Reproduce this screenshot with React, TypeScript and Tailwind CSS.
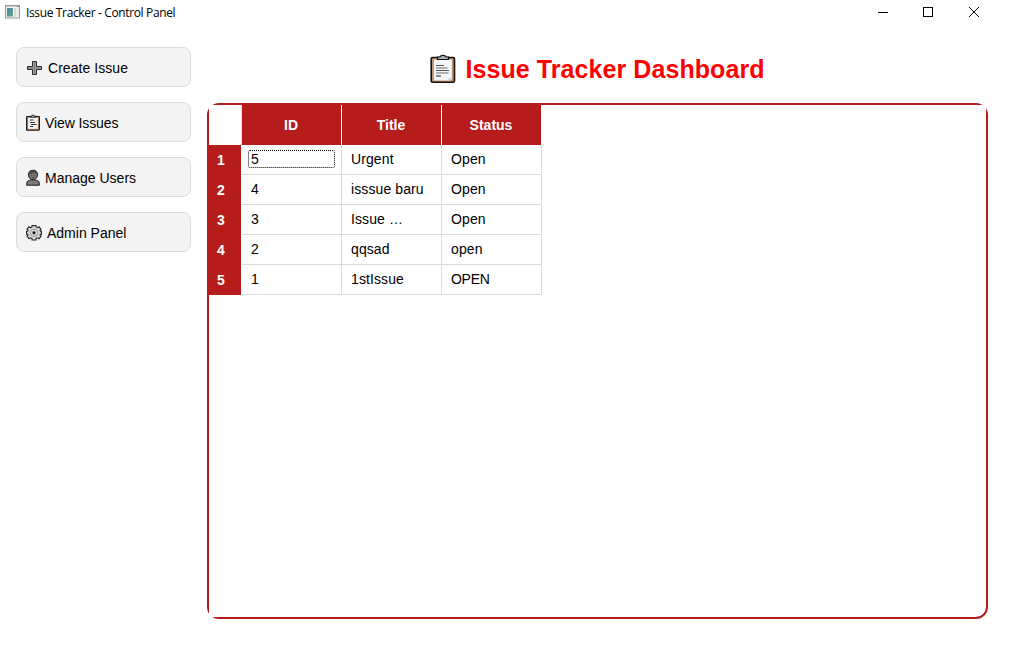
import React from 'react';

const PlusIcon = () => (
  <svg width="16" height="16" viewBox="0 0 16 16" className="mt-[2px] block shrink-0">
    <path d="M6.500 1.500h4v5h5v3h-5v5h-4v-5h-5v-3h5z" fill="#a8a8a8" stroke="#2b2b2b" strokeWidth="1" />
    <path d="M8.500 2v12M2 8h13" stroke="#777" strokeWidth="1" />
  </svg>
);

const ClipboardIcon = () => (
  <svg width="14" height="17" viewBox="0 0 14 17" className="block shrink-0">
    <rect x="0.600" y="2.500" width="12.800" height="13.700" rx="0.600" fill="#b58b6c" stroke="#151515" strokeWidth="1.100" />
    <rect x="2.200" y="3.500" width="9.600" height="11.300" fill="#f6f6f6" />
    <path d="M3.500 3.200V2.200h2.200C6 .5 8 .5 8.300 2.200h2.200v1z" fill="#c5c5c5" stroke="#1b1b1b" strokeWidth=".9" />
    <path d="M4 6h3.500M4 8.500h5M5 10.500h5.500M4 12.500h3" stroke="#333" strokeWidth="1" />
  </svg>
);

const LargeClipboardIcon = () => (
  <svg width="26" height="30" viewBox="0 0 26 30" className="block shrink-0">
    <rect x="1.200" y="3.500" width="23.300" height="24.800" rx="1.500" fill="#c09570" stroke="#111" strokeWidth="1.600" />
    <path d="M4 5.500h17.800V25L20 26.500H4z" fill="#f5f6f8" />
    <path d="M18.500 26.500V24h3z" fill="#c5c8cc" />
    <path d="M7.500 5.500V3H10C10.500.7 15.500.7 16 3h2.500v2.500z" fill="#aeb2b8" stroke="#111" strokeWidth="1.200" />
    <path d="M6 11.500h8M6 16.500h13" stroke="#555" strokeWidth="1.200" />
    <path d="M6 14h11.500M6 19h12.500" stroke="#999" strokeWidth="1.500" />
    <path d="M6 22h5" stroke="#444" strokeWidth="1.200" />
  </svg>
);

const UserIcon = () => (
  <svg width="14" height="17" viewBox="0 0 14 17" className="block shrink-0">
    <path d="M.7 16.200v-2c0-1.800 1.500-2.700 4.300-3.200h4c2.800.5 4.300 1.400 4.300 3.200v2z" fill="#7c7c7c" stroke="#1c1c1c" strokeWidth="1" />
    <path d="M5 9.500h4v2L7 12.300l-2-.8z" fill="#666" />
    <path d="M2.500 6.300C2.300 2.900 4 1.200 7 1.200s4.700 1.700 4.500 5.100C11.300 9 9.300 10.700 7 10.700S2.700 9 2.500 6.300z" fill="#747474" stroke="#222" strokeWidth="1" />
    <path d="M3 5C3.200 2.500 4.700 1.600 7 1.600S10.800 2.500 11 5C9.500 4.700 9 3.800 8.500 3.300 7 4.600 4.600 5 3 5z" fill="#484848" />
    <path d="M4.900 6.500h1M8.100 6.500h1M6 8.700h2" stroke="#444" strokeWidth=".8" />
  </svg>
);

const GearIcon = () => (
  <svg width="16" height="17" viewBox="0 0 16 17" className="block shrink-0">
    <path
      d="M6 3V1.500h4V3l1.500.7L13 2.800l2 2.400-1 1.300.5.800h1v3h-1l-.5.700 1 1.300-2 2.400-1.500-.9L10 14.500V16H6v-1.500l-1.500-.7-1.500.9-2-2.400 1-1.300-.5-.7h-1v-3h1l.5-.800-1-1.300 2-2.400 1.500.9z"
      fill="#d6d6d6"
      stroke="#222"
      strokeWidth="1.100"
    />
    <circle cx="8" cy="8.800" r="3.700" fill="#e2e2e2" stroke="#8d8d8d" strokeWidth=".9" />
    <circle cx="8" cy="8.800" r="2" fill="#888" />
    <circle cx="8" cy="8.800" r="1.200" fill="#111" />
  </svg>
);

const AppIcon = () => (
  <svg width="15" height="14" viewBox="0 0 15 14" className="-mt-px block shrink-0">
    <defs>
      <linearGradient id="pane" x1="0" y1="0" x2="1" y2="1">
        <stop offset="0" stopColor="#4c7fb0" />
        <stop offset="1" stopColor="#62ad7c" />
      </linearGradient>
    </defs>
    <rect x=".5" y=".5" width="14" height="12.500" fill="#f1f1f1" stroke="#969ca3" />
    <path d="M1 1.500h13" stroke="#c6ccd3" />
    <rect x="2" y="3" width="6" height="8.500" fill="url(#pane)" />
    <rect x="9" y="3" width="2" height="8.500" fill="#d5dade" />
    <rect x="12" y="3" width="1.500" height="8.500" fill="#e0e4e7" />
    <path d="M12 1.500h1.500" stroke="#4f9e70" />
  </svg>
);

const menu = [
  { label: 'Create Issue', icon: <PlusIcon />, text: 'pl-[6px] tracking-[0.05px]' },
  { label: 'View Issues', icon: <ClipboardIcon />, text: 'pl-[5px] tracking-[-0.1px]' },
  { label: 'Manage Users', icon: <UserIcon />, text: 'pl-[5px]' },
  { label: 'Admin Panel', icon: <GearIcon />, text: 'pl-[5px]' },
];

const rows = [
  ['5', 'Urgent', 'Open'],
  ['4', 'isssue baru', 'Open'],
  ['3', 'Issue …', 'Open'],
  ['2', 'qqsad', 'open'],
  ['1', '1stIssue', 'OPEN'],
];

function TitleBar() {
  return (
    <header className="flex h-[25px] items-center justify-between pl-[5px]">
      <div className="flex items-center gap-[6px]">
        <AppIcon />
        <span className="whitespace-nowrap pt-px font-['Open_Sans',sans-serif] text-[12px] leading-[16px] tracking-[-0.36px]">
          Issue Tracker - Control Panel
        </span>
      </div>
      <div className="-mt-px flex pr-[32px]">
        <svg width="12" height="12" viewBox="0 0 12 12" className="mr-[33px]" shapeRendering="crispEdges">
          <path d="M1 6.500h10" stroke="#000" />
        </svg>
        <svg width="12" height="12" viewBox="0 0 12 12" className="mr-[34px]" shapeRendering="crispEdges">
          <path d="M1.500 1.500h9v9h-9z" fill="none" stroke="#000" />
        </svg>
        <svg width="12" height="12" viewBox="0 0 12 12">
          <path d="M1 1l10 10M11 1L1 11" stroke="#000" strokeWidth="1" />
        </svg>
      </div>
    </header>
  );
}

function Sidebar() {
  return (
    <nav className="flex w-[175px] shrink-0 flex-col gap-[15px] pt-[22px]">
      {menu.map((item) => (
        <button
          key={item.label}
          className="flex h-10 w-full items-center rounded-[8px] border border-[#dcdcdc] bg-[#f4f4f4] pl-[9px] text-left text-[14px] leading-[20px]"
        >
          {item.icon}
          <span className={`pt-[2px] ${item.text}`}>{item.label}</span>
        </button>
      ))}
    </nav>
  );
}

function IssueTable() {
  return (
    <div className="relative h-[516px] w-[781px] rounded-[12px] border-2 border-[#b71c1c]">
      <span className="absolute left-0 top-0 size-3 bg-white" />
      <span className="absolute right-0 top-0 size-3 bg-white" />
      <span className="absolute bottom-0 left-0 size-3 bg-white" />
      <div className="relative w-[333px]">
        <div className="flex h-10 text-[14px] font-bold text-white">
          <div className="w-[33px] border-r border-[#e0e0e0] bg-white" />
          {['ID', 'Title', 'Status'].map((name) => (
            <div
              key={name}
              className="flex w-[100px] items-center justify-center border-r border-white bg-[#b71c1c] pr-px"
            >
              {name}
            </div>
          ))}
        </div>
        {rows.map((row, r) => (
          <div key={row[0]} className="flex h-[30px] text-[14px] leading-[20px]">
            <div className="mr-px flex w-8 items-center bg-[#b71c1c] pl-2 font-bold text-white">{r + 1}</div>
            {row.map((cell, c) => (
              <div key={c} className="flex w-[100px] items-start border-b border-r border-[#dcdcdc] pl-[6px] pt-[6px]">
                <span
                  className={
                    r === 0 && c === 0
                      ? '-mt-px h-[18px] w-[87px] rounded-[2px] border border-dotted border-black pl-[2px] leading-[16px]'
                      : cell === 'OPEN'
                        ? 'whitespace-nowrap pl-[3px] leading-[16px] tracking-[-0.3px]'
                        : 'whitespace-nowrap pl-[3px] leading-[16px] tracking-[0.1px]'
                  }
                >
                  {cell}
                </span>
              </div>
            ))}
          </div>
        ))}
      </div>
    </div>
  );
}

export default function App() {
  return (
    <div className="h-[656px] w-[1012px] overflow-hidden bg-white font-['Liberation_Sans',Arial,sans-serif] text-black">
      <TitleBar />
      <div className="flex gap-4 pl-4">
        <Sidebar />
        <main className="w-[781px] pt-[15px]">
          <h1 className="flex h-[63px] items-center justify-center gap-[9px] pb-[5px] text-[25px] font-bold tracking-[0.08px] text-[#ff0000]">
            <LargeClipboardIcon />
            <span className="pt-[2px]">Issue Tracker Dashboard</span>
          </h1>
          <IssueTable />
        </main>
      </div>
    </div>
  );
}
